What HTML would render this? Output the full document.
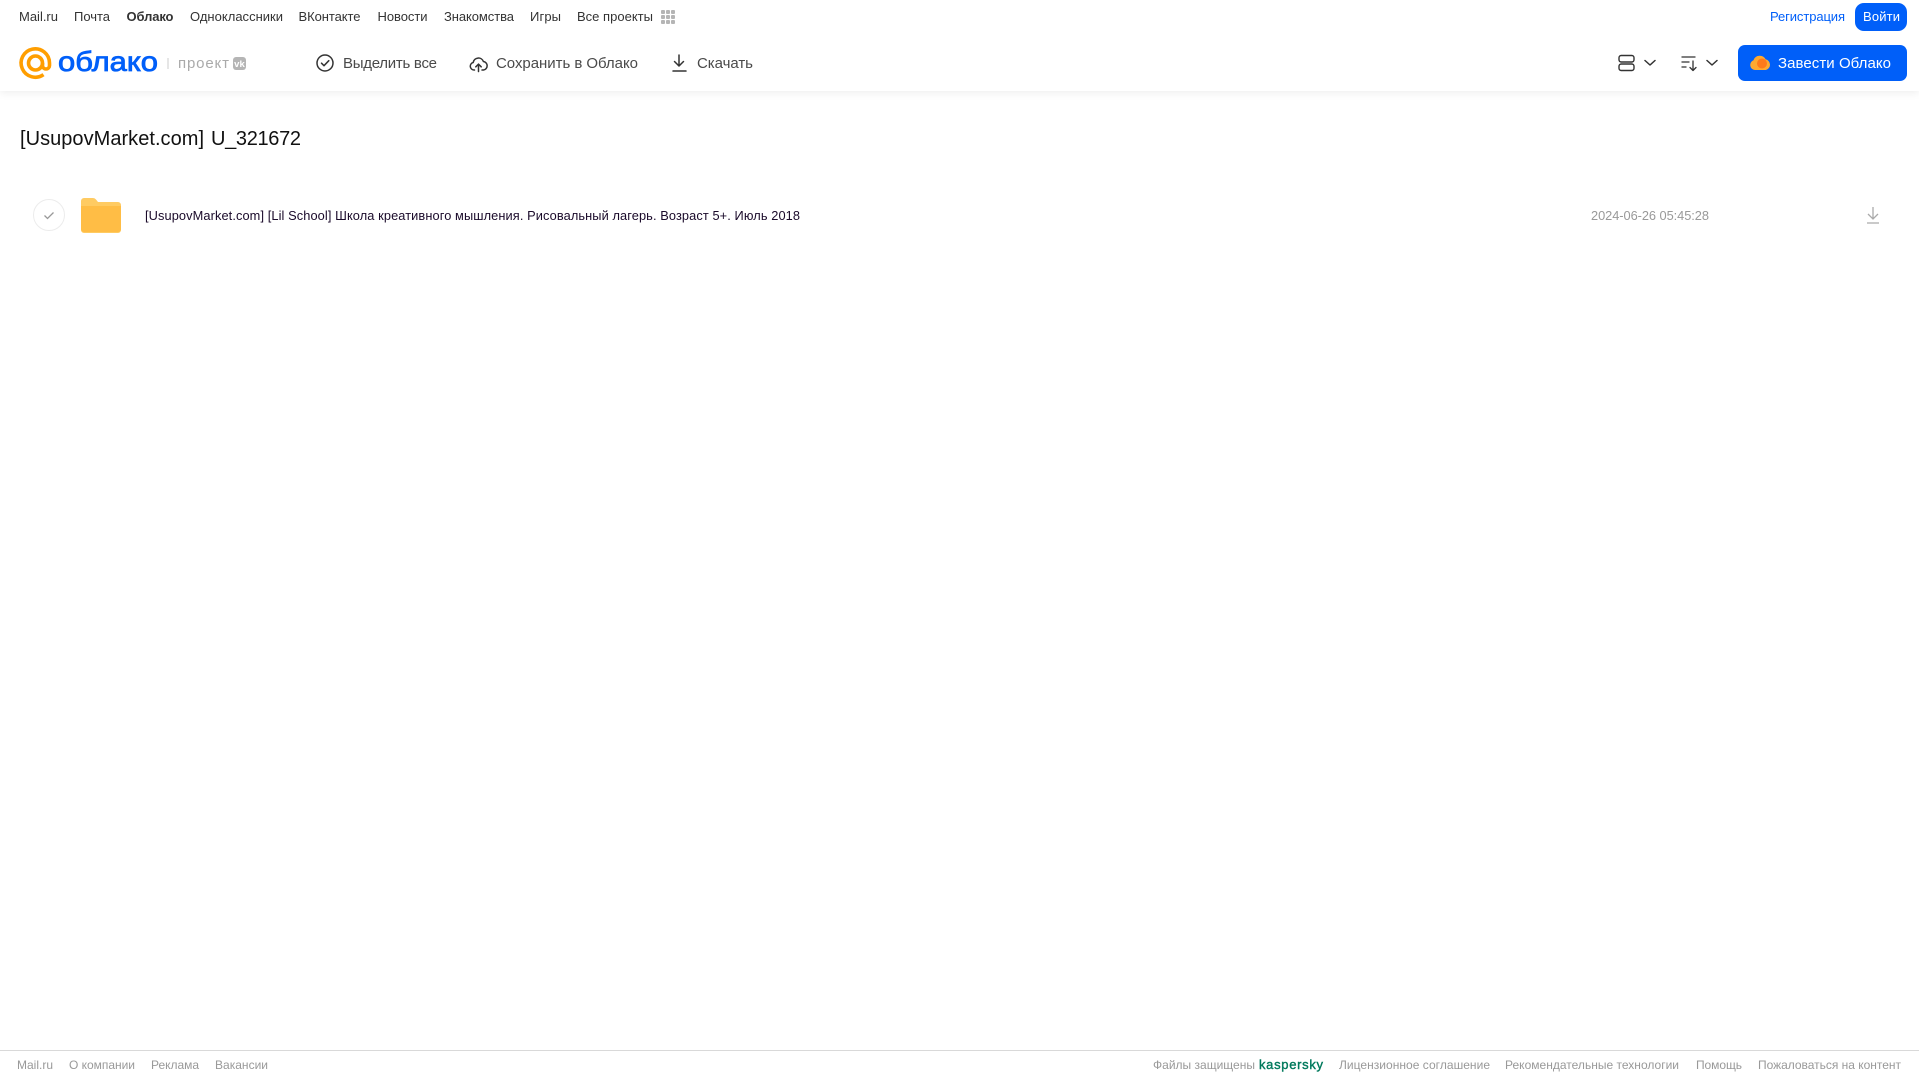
<!DOCTYPE html>
<html lang="ru"><head><meta charset="utf-8"><title>Облако</title>
<style>
html,body{margin:0;padding:0;background:#fff;width:1919px;height:1079px;overflow:hidden}
.hdr{position:absolute;left:0;top:0;width:1919px;height:91px;background:#fff;box-shadow:0 2px 8px rgba(0,0,0,.07)}
svg{position:absolute;left:0;top:0}
text{font-family:"Liberation Sans","Noto Sans CJK SC",sans-serif}
.n{font-size:13px;fill:#333}
.t{font-size:15px;fill:#4a4a4a}
.f{font-size:12px;fill:#999}
</style></head><body>
<div class="hdr"></div>
<svg width="1919" height="1079" viewBox="0 0 1919 1079" xmlns="http://www.w3.org/2000/svg">
<text class="n" x="19" y="21" textLength="39">Mail.ru</text>
<text class="n" x="74" y="21" textLength="36">Почта</text>
<text class="n" x="126.500" y="21" textLength="47" font-weight="700">Облако</text>
<text class="n" x="190" y="21" textLength="93">Одноклассники</text>
<text class="n" x="298.500" y="21" textLength="62">ВКонтакте</text>
<text class="n" x="377.500" y="21" textLength="50">Новости</text>
<text class="n" x="444" y="21" textLength="70">Знакомства</text>
<text class="n" x="530" y="21" textLength="31">Игры</text>
<text class="n" x="577" y="21" textLength="76">Все проекты</text>
<g fill="#b5b5b5">
<rect x="661" y="10" width="4" height="4" rx="1"/><rect x="666" y="10" width="4" height="4" rx="1"/><rect x="671" y="10" width="4" height="4" rx="1"/>
<rect x="661" y="15" width="4" height="4" rx="1"/><rect x="666" y="15" width="4" height="4" rx="1"/><rect x="671" y="15" width="4" height="4" rx="1"/>
<rect x="661" y="20" width="4" height="4" rx="1"/><rect x="666" y="20" width="4" height="4" rx="1"/><rect x="671" y="20" width="4" height="4" rx="1"/>
</g>
<text x="1770" y="21" font-size="13" fill="#005ff9" textLength="75">Регистрация</text>
<rect x="1855" y="3" width="52" height="28" rx="9" fill="#005ff9"/>
<text x="1863" y="21" font-size="13" fill="#fff" textLength="37">Войти</text>

<g fill="none" stroke="#ff9e00" stroke-width="3.600">
<circle cx="35.500" cy="63" r="7"/>
<path d="M42.500 63v2.500a3.500 3.500 0 0 0 7 0V63a14.200 14.200 0 1 0-6 11.600"/>
</g>
<text x="58" y="71" font-size="27.500" fill="#005ff9" stroke="#005ff9" stroke-width=".8" textLength="100" lengthAdjust="spacingAndGlyphs">облако</text>
<rect x="167.500" y="58" width="1" height="11" fill="#ccc"/>
<text x="178" y="68" font-size="15" fill="#aaa" textLength="51">проект</text>
<rect x="233" y="57" width="13" height="13" rx="3" fill="#b5b5b5"/>
<text x="234.200" y="67" font-size="9" font-weight="700" fill="#fff" textLength="10.600" lengthAdjust="spacingAndGlyphs">vk</text>

<g fill="none" stroke="#333" stroke-width="1.500" stroke-linecap="round" stroke-linejoin="round">
<circle cx="325" cy="63" r="8"/><path d="M321.500 63.200l2.500 2.500 4.800-5"/>
<path d="M474.500 70h-.5a3.800 3.800 0 0 1-.8-7.500 5.300 5.300 0 0 1 10.200-1 4.300 4.300 0 0 1 .2 8.500H482"/><path d="M478.500 71.500v-7M475.800 66.800l2.700-2.700 2.700 2.700"/>
<path d="M679 55v11M674.500 61.500l4.500 4.500 4.500-4.500M673 71h13"/>
<rect x="1619" y="55.500" width="15" height="6.500" rx="2.200" stroke-width="1.400"/><rect x="1619" y="64" width="15" height="6.500" rx="2.200" stroke-width="1.400"/>
<path d="M1645 60.500l5 4.500 5-4.500M1707 60.500l5 4.500 5-4.500"/>
<path d="M1682 57h13M1682 62h7M1682 67h4M1693 61v9M1690 67.500l3 3 3-3" stroke-width="1.300"/>
</g>
<text class="t" x="343" y="68" textLength="94">Выделить все</text>
<text class="t" x="496" y="68" textLength="142">Сохранить в Облако</text>
<text class="t" x="697" y="68" textLength="56">Скачать</text>

<rect x="1738" y="45" width="169" height="36" rx="7" fill="#005ff9"/>
<path d="M1755 70a5 5 0 0 1-1.500-9.700 6.500 6.500 0 0 1 12-1 5.500 5.500 0 0 1 .5 10.700z" fill="#ffa930"/>
<circle cx="1762" cy="63.500" r="5" fill="#ff7a1a"/>
<text x="1778" y="68" font-size="15" fill="#fff" textLength="113">Завести Облако</text>

<text x="20" y="145" font-size="20" fill="#111" textLength="184">[UsupovMarket.com]</text>
<text x="211" y="145" font-size="20" fill="#111" textLength="90">U_321672</text>

<circle cx="49" cy="215" r="15.500" fill="#fff" stroke="#ececec"/>
<path d="M44.500 215.500l3 3 6-6" fill="none" stroke="#999" stroke-width="1.300"/>
<path d="M81 201a3 3 0 0 1 3-3h9a4 4 0 0 1 3 1.500l2 2.500h20a3 3 0 0 1 3 3v25a3 3 0 0 1-3 3H84a3 3 0 0 1-3-3z" fill="#ffcb62"/>
<path d="M81 206h40v23a3 3 0 0 1-3 3H84a3 3 0 0 1-3-3z" fill="#ffbd45"/>
<text x="145" y="220" font-size="12.800" fill="#1a0a2a" textLength="655">[UsupovMarket.com] [Lil School] Школа креативного мышления. Рисовальный лагерь. Возраст 5+. Июль 2018</text>
<text x="1591" y="220" font-size="12.800" fill="#999" textLength="118">2024-06-26 05:45:28</text>
<path d="M1873 207v12M1868 214l5 5 5-5M1867 223h12" fill="none" stroke="#aaa" stroke-width="1.300"/>

<rect x="0" y="1050" width="1919" height="1" fill="#d9d9d9"/>
<text class="f" x="17" y="1069" textLength="36">Mail.ru</text>
<text class="f" x="69" y="1069" textLength="66">О компании</text>
<text class="f" x="151" y="1069" textLength="48">Реклама</text>
<text class="f" x="215" y="1069" textLength="53">Вакансии</text>
<text class="f" x="1153" y="1069" textLength="102">Файлы защищены</text>
<text x="1259" y="1069" font-size="13" fill="#00795c" stroke="#00795c" stroke-width=".4" textLength="64">kaspersky</text>
<text class="f" x="1339" y="1069" textLength="151">Лицензионное соглашение</text>
<text class="f" x="1505" y="1069" textLength="174">Рекомендательные технологии</text>
<text class="f" x="1696" y="1069" textLength="46">Помощь</text>
<text class="f" x="1758" y="1069" textLength="143">Пожаловаться на контент</text>
</svg>
</body></html>
